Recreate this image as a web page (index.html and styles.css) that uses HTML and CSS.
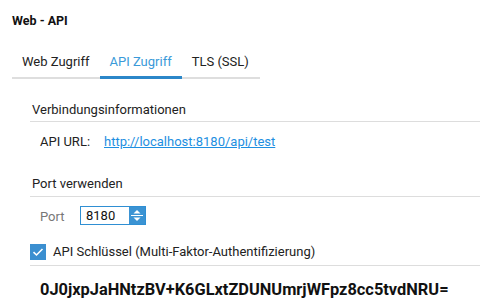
FILE: index.html
```html
<!DOCTYPE html>
<html lang="de">
<head>
<meta charset="utf-8">
<link rel="stylesheet" href="styles.css">
</head>
<body>
<div class="title">Web - API</div>
<div class="tabs">
  <div class="tab">Web Zugriff</div>
  <div class="tab active">API Zugriff</div>
  <div class="tab">TLS (SSL)</div>
</div>
<div class="section">
  <div class="heading h1">Verbindungsinformationen</div>
  <div class="row url-row">
    <span class="label">API URL:</span>
    <a class="link" href="#">http://localhost:8180/api/test</a>
  </div>
  <div class="heading h2">Port verwenden</div>
  <div class="row port-row">
    <span class="port-label">Port</span>
    <div class="spin">
      <span class="spin-value">8180</span>
      <span class="spin-btn">
        <svg width="16" height="17" viewBox="0 0 16 17">
          <path d="M4.5 6.5 L8 3 L11.5 6.5 Z" fill="#fff"/>
          <rect x="2" y="8" width="12" height="1" fill="#fff"/>
          <path d="M4.5 10.5 L8 14 L11.5 10.5 Z" fill="#fff"/>
        </svg>
      </span>
    </div>
  </div>
  <div class="check-row">
    <span class="checkbox">
      <svg width="16" height="16" viewBox="0 0 16 16">
        <path d="M3.5 8.2 L6.5 11 L12.5 5" fill="none" stroke="#fff" stroke-width="1.6"/>
      </svg>
    </span>
    <span class="check-text">API Schlüssel (Multi-Faktor-Authentifizierung)</span>
  </div>
  <div class="key">0J0jxpJaHNtzBV+K6GLxtZDUNUmrjWFpz8cc5tvdNRU=</div>
</div>
</body>
</html>
```

FILE: styles.css
```css
html, body {
  margin: 0;
  padding: 0;
  background: #fff;
}
body {
  font-family: Roboto, "Liberation Sans", sans-serif;
  font-size: 13px;
  line-height: 16px;
  color: #222;
  width: 480px;
  height: 307px;
  overflow: hidden;
}
.title {
  padding: 13px 12px 0;
  font-weight: bold;
  font-size: 12.5px;
  color: #111;
}
.tabs {
  display: flex;
  margin: 25px 0 0 12px;
  width: 248px;
  border-bottom: 2px solid #dedede;
}
.tab {
  padding: 0 10px 7px;
  margin-bottom: -2px;
  border-bottom: 2px solid transparent;
  color: #222;
}
.tab.active {
  color: #3a9ad9;
  border-bottom: 3px solid #2b87c9;
  padding-bottom: 6px;
}
.section {
  margin-left: 30px;
}
.heading {
  padding: 0 0 3px 2px;
  border-bottom: 1px solid #dddddd;
  color: #222;
}
.h1 {
  margin-top: 23px;
}
.h2 {
  margin-top: 26px;
  padding-bottom: 4px;
}
.row {
  display: flex;
  align-items: center;
  padding-left: 10px;
}
.url-row {
  margin-top: 12px;
}
.label {
  width: 64px;
}
.link {
  color: #1e8fe1;
  text-decoration: underline;
}
.port-row {
  margin-top: 9px;
  height: 19px;
}
.port-label {
  width: 40px;
  color: #777;
  padding-top: 3px;
}
.spin {
  display: flex;
  width: 64px;
  height: 17px;
  border: 1px solid #2f8fd3;
}
.spin-value {
  flex: 1;
  padding-left: 5px;
  line-height: 17px;
  color: #111;
}
.spin-btn {
  width: 16px;
  height: 17px;
  background: #3b93d3;
  display: flex;
}
.check-row {
  display: flex;
  align-items: center;
  gap: 7px;
  margin-top: 18px;
  padding-bottom: 5px;
  border-bottom: 1px solid #dddddd;
}
.checkbox {
  width: 16px;
  height: 16px;
  background: #3b8fd0;
  display: flex;
}
.check-text {
  color: #222;
  padding-top: 1px;
}
.key {
  margin-top: 14px;
  padding-left: 10px;
  font-size: 16.4px;
  line-height: 20px;
  font-weight: bold;
  color: #111;
}
```
